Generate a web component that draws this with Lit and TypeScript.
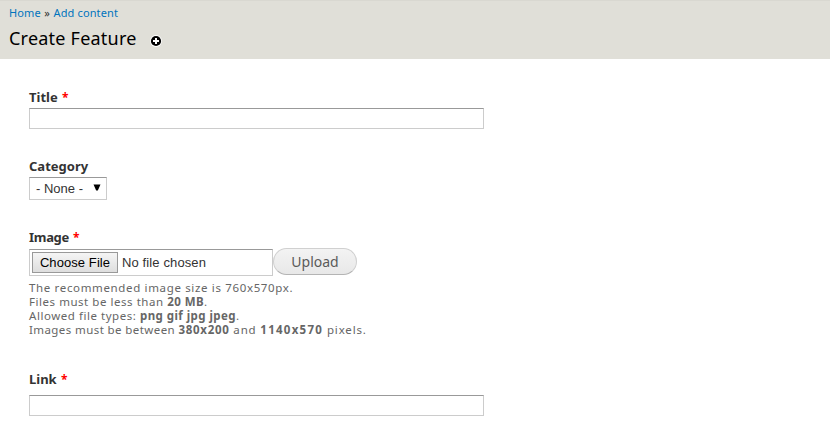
import { LitElement, html, css } from "lit";
import { customElement } from "lit/decorators.js";

@customElement("app-root")
export class AppRoot extends LitElement {
  static styles = css`
    :host { display: block; height: 434px; overflow: hidden; background: #fff; color: #333; font: 11px/14px "Noto Sans", "Open Sans", sans-serif; }
    * { box-sizing: border-box; }
    header { height: 59px; background: #e0dfd8; padding: 5px 9px 0; border-top: 1px solid #d9d8d1; }
    .crumbs { display: flex; gap: 3.5px; height: 14px; letter-spacing: 0.13px; white-space: nowrap; }
    .crumbs a { color: #0074bd; text-decoration: none; }
    .heading { display: flex; align-items: center; height: 24px; margin-top: 6px; }
    h1 { margin: 0; width: 141px; font-size: 18px; line-height: 24px; font-weight: 400; color: #000; letter-spacing: 0.22px; white-space: nowrap; }
    .plus { display: block; margin-top: 6px; }
    main { padding: 30px 29px 0; }
    .label { display: block; height: 16px; font-size: 13px; line-height: 16px; font-weight: 700; color: #333; white-space: nowrap; }
    .snug { letter-spacing: -0.3px; }
    .star { color: #f00; font-size: 12px; margin-left: 1px; }
    .box { border: 1px solid #ccc; border-top-color: #999; background: #fff; }
    .text { display: block; width: 455px; height: 21px; margin-top: 3px; padding: 0 3px; outline: none; border-radius: 0; }
    .field { margin-bottom: 29px; }
    .select { display: flex; align-items: center; justify-content: space-between; width: 78px; height: 23px; margin-top: 3px; padding: 0 5px 0 6px; font: 13px/21px "Liberation Sans", sans-serif; }
    .arrow { display: block; margin-top: -2px; }
    .row { display: flex; margin-top: 3px; }
    .file { display: flex; align-items: center; gap: 4px; width: 244px; height: 27px; margin-top: 1px; padding: 0 2px; font: 13px/19px "Liberation Sans", sans-serif; letter-spacing: 0.12px; }
    .choose { width: 86px; height: 21px; padding: 0; border: 1px solid #999; background: linear-gradient(#f5f5f5, #dedede); color: #000; font: 13px/19px "Liberation Sans", sans-serif; letter-spacing: 0.08px; white-space: nowrap; }
    .upload { width: 84px; height: 27px; padding: 0; border: 1px solid #d0d0d0; border-bottom-color: #b4b4b4; border-radius: 14px; background: linear-gradient(#f3f3f3, #e8e8e8); color: #5a5a5a; font: 14px/25px "Noto Sans", sans-serif; }
    .help { margin-top: 5px; color: #666; font-size: 11.5px; letter-spacing: 0.54px; white-space: nowrap; }
    .help div { height: 14px; }
    .help .l1 { letter-spacing: 0.65px; }
    .help .l4 { letter-spacing: 0.41px; }
    .help b { letter-spacing: 0.45px; }
    .help .wide { letter-spacing: 0.7px; }
    .help .wider { letter-spacing: 1.25px; }
    .help .loose { letter-spacing: 0.85px; }
    .link { margin-top: 34px; }
    .link .text { margin-top: 8px; }
  `;
  render() {
    return html`
      <header>
        <nav class="crumbs"><a>Home</a><span>»</span><a>Add content</a></nav>
        <div class="heading"><h1>Create Feature</h1>
          <svg class="plus" width="12" height="12" viewBox="0 0 12 12"><circle cx="6" cy="6" r="5.9" fill="#fff" /><circle cx="6" cy="6" r="5.1" /><path d="M6 3v6M3 6h6" stroke="#fff" stroke-width="2" /></svg>
        </div>
      </header>
      <main>
        <div class="field"><label class="label">Title <span class="star">*</span></label><input class="box text" /></div>
        <div class="field"><label class="label">Category</label>
          <div class="box select"><span>- None -</span><svg class="arrow" width="8" height="7" viewBox="0 0 8 7"><path d="M.5 .5h7L4.8 6.5H3.2z" fill="#000" /></svg></div></div>
        <div><label class="label snug">Image <span class="star">*</span></label>
          <div class="row"><div class="box file"><button class="choose">Choose File</button><span>No file chosen</span></div><button class="upload">Upload</button></div>
          <div class="help">
            <div class="l1">The recommended image size is 760x570px.</div>
            <div>Files must be less than <b>20 MB</b>.</div>
            <div>Allowed file types: <b>png gif jpg jpeg</b>.</div>
            <div class="l4">Images must be between <b class="wide">380x200</b><span class="loose"> and </span><b class="wider">1140x570</b><span class="loose"> pixels.</span></div>
          </div></div>
        <div class="link"><label class="label">Link <span class="star">*</span></label><input class="box text" /></div>
      </main>`;
  }
}
